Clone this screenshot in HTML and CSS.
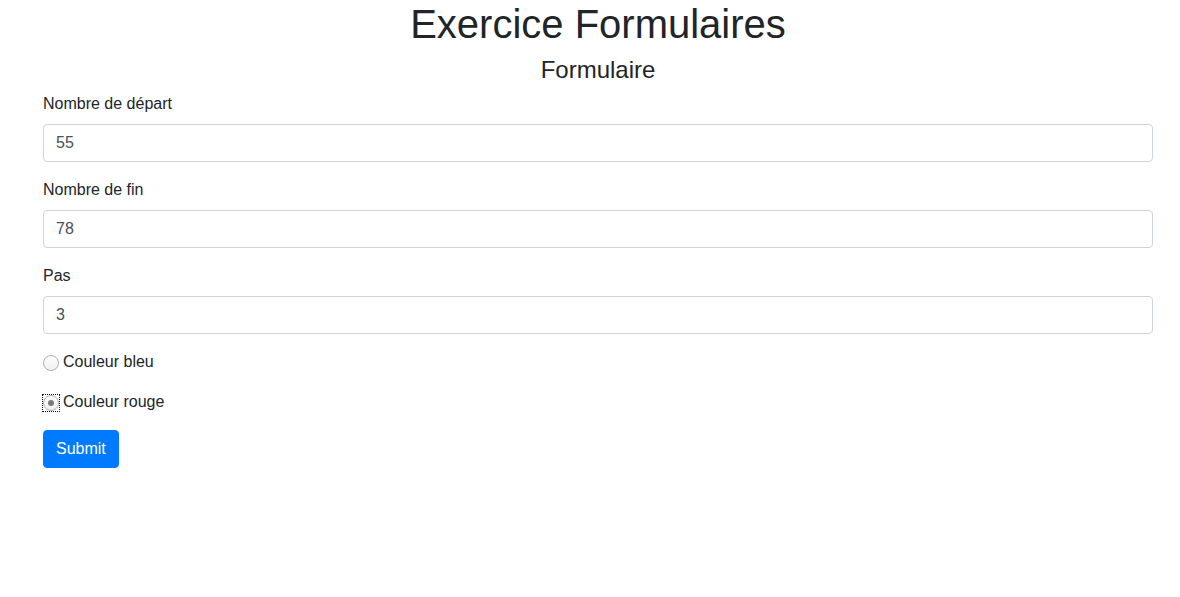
FILE: index.html
```html
<!DOCTYPE html>
<html lang="fr">
<head>
<meta charset="utf-8">
<title>Exercice Formulaires</title>
<link rel="stylesheet" href="styles.css">
</head>
<body>
<div class="container">
  <h1 class="title">Exercice Formulaires</h1>
  <h4 class="subtitle">Formulaire</h4>
  <form class="form">
    <div class="form-group">
      <label class="label">Nombre de départ</label>
      <input class="form-control" type="text" value="55">
    </div>
    <div class="form-group">
      <label class="label">Nombre de fin</label>
      <input class="form-control" type="text" value="78">
    </div>
    <div class="form-group">
      <label class="label">Pas</label>
      <input class="form-control" type="text" value="3">
    </div>
    <div class="form-group radio-row">
      <span class="radio-wrap"><span class="radio"></span></span><span class="radio-label">Couleur bleu</span>
    </div>
    <div class="form-group radio-row">
      <span class="radio-wrap focused"><span class="radio checked"></span></span><span class="radio-label">Couleur rouge</span>
    </div>
    <div class="btn-row">
      <span class="btn">Submit</span>
    </div>
  </form>
</div>
</body>
</html>
```

FILE: styles.css
```css
* { box-sizing: border-box; }
html, body {
  margin: 0;
  padding: 0;
  background: #fff;
}
body {
  font-family: "Liberation Sans", Arial, sans-serif;
  font-size: 16px;
  line-height: 1.5;
  color: #212529;
}
.container {
  width: 1110px;
  margin-left: 43px;
}
.title {
  margin: 0 0 8px;
  font-size: 40px;
  font-weight: 400;
  line-height: 48px;
  text-align: center;
}
.subtitle {
  margin: 0 0 8px;
  font-size: 24px;
  font-weight: 400;
  line-height: 28px;
  text-align: center;
}
.form { margin: 0; }
.form-group {
  margin-bottom: 16px;
}
.label {
  display: block;
  margin-bottom: 8px;
  height: 24px;
}
.form-control {
  display: block;
  width: 100%;
  height: 38px;
  padding: 6px 12px;
  font-family: inherit;
  font-size: 16px;
  line-height: 1.5;
  color: #495057;
  background: #fff;
  border: 1px solid #ced4da;
  border-radius: 4px;
  outline: none;
}
.radio-row {
  display: flex;
  align-items: center;
  height: 24px;
}
.radio-wrap {
  display: block;
  width: 16px;
  height: 16px;
  margin-top: 2px;
  margin-right: 4px;
  flex: none;
}
.radio-wrap.focused {
  outline: 1px dotted #111;
  outline-offset: 0;
}
.radio {
  position: relative;
  display: block;
  width: 16px;
  height: 16px;
  border: 1px solid #b0b0b0;
  border-radius: 50%;
  background: linear-gradient(#fdfdfd, #f0f0f0);
}
.radio.checked::after {
  content: "";
  position: absolute;
  left: 4px;
  top: 4px;
  width: 6px;
  height: 6px;
  border-radius: 50%;
  background: #7a7a7a;
}
.btn-row { display: flex; }
.btn {
  display: inline-block;
  padding: 6px 12px;
  font-size: 16px;
  line-height: 1.5;
  color: #fff;
  background: #007bff;
  border: 1px solid #007bff;
  border-radius: 4px;
}
```
